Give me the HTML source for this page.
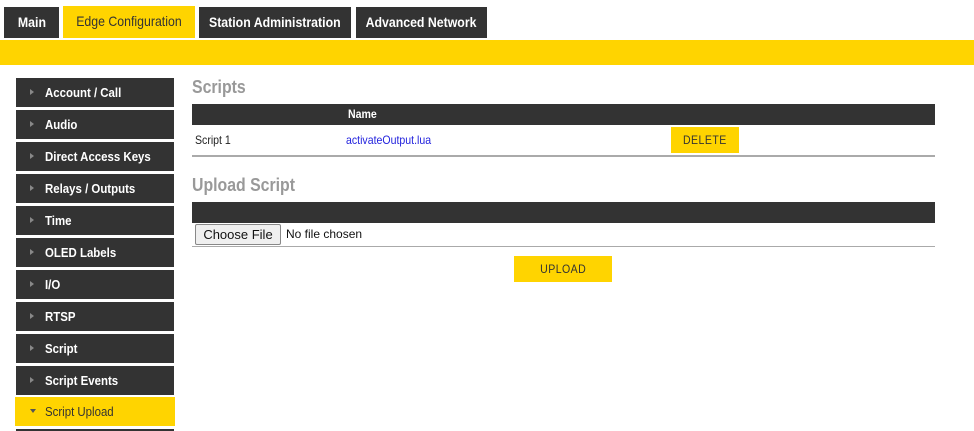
<!DOCTYPE html>
<html><head><style>
*{margin:0;padding:0;box-sizing:border-box}
html,body{width:974px;height:431px;overflow:hidden}
body{background:#fff;font-family:"Liberation Sans",sans-serif;position:relative}
.a{position:absolute}
.n{display:inline-block;transform:scaleX(0.88);transform-origin:left center;white-space:nowrap}
.c{transform-origin:center center}
.tab{position:absolute;background:#333;color:#fff;font-size:14px;font-weight:bold;text-align:center;line-height:31px;top:7px;height:31px;white-space:nowrap}
.bar{left:0;top:40px;width:974px;height:25px;background:#ffd400}
.si{position:absolute;left:16px;width:158px;height:29px;background:#333;color:#fff;font-size:13px;font-weight:bold;line-height:29px;padding-left:29px}
.si:before{content:"";position:absolute;left:14px;top:11px;border-left:4px solid #888;border-top:3.5px solid transparent;border-bottom:3.5px solid transparent}
.si.cur:before,.si.e:before{display:none}
.h{color:#999;font-size:18px;font-weight:bold}
.btn{background:#ffd400;color:#333;font-size:12px;text-align:center;letter-spacing:.5px}
</style></head><body>
<div class="tab" style="left:4px;width:55px"><span class="n c">Main</span></div>
<div class="tab" style="left:63px;width:132px;top:6px;height:32px;background:#ffd400;color:#333;font-weight:normal"><span class="n c">Edge Configuration</span></div>
<div class="tab" style="left:199px;width:152px"><span class="n c">Station Administration</span></div>
<div class="tab" style="left:356px;width:131px"><span class="n c">Advanced Network</span></div>
<div class="a bar"></div>

<div class="si" style="top:78px"><span class="n">Account / Call</span></div>
<div class="si" style="top:110px"><span class="n">Audio</span></div>
<div class="si" style="top:142px"><span class="n">Direct Access Keys</span></div>
<div class="si" style="top:174px"><span class="n">Relays / Outputs</span></div>
<div class="si" style="top:206px"><span class="n">Time</span></div>
<div class="si" style="top:238px"><span class="n">OLED Labels</span></div>
<div class="si" style="top:270px"><span class="n">I/O</span></div>
<div class="si" style="top:302px"><span class="n">RTSP</span></div>
<div class="si" style="top:334px"><span class="n">Script</span></div>
<div class="si" style="top:366px"><span class="n">Script Events</span></div>
<div class="si cur" style="top:397px;left:15px;width:160px;background:#ffd400;color:#333;font-weight:normal;padding-left:30px"><span class="n">Script Upload</span></div>
<div class="a" style="left:30px;top:409px;border-top:4px solid #555;border-left:3.5px solid transparent;border-right:3.5px solid transparent"></div>
<div class="si e" style="top:429px;height:2px"></div>

<div class="a h" style="left:192px;top:77px"><span class="n">Scripts</span></div>
<div class="a" style="left:192px;top:104px;width:743px;height:21px;background:#333"></div>
<div class="a" style="left:348px;top:107px;color:#fff;font-size:12px;font-weight:bold"><span class="n">Name</span></div>
<div class="a" style="left:195px;top:133px;font-size:12px;color:#222"><span class="n">Script 1</span></div>
<div class="a" style="left:346px;top:133px;font-size:12px;color:#2222dd"><span class="n">activateOutput.lua</span></div>
<div class="a btn" style="left:671px;top:127px;width:68px;height:26px;line-height:26px"><span class="n c">DELETE</span></div>
<div class="a" style="left:192px;top:155px;width:743px;height:2px;background:#aaa"></div>

<div class="a h" style="left:192px;top:175px"><span class="n">Upload Script</span></div>
<div class="a" style="left:192px;top:202px;width:743px;height:21px;background:#333"></div>
<div class="a" style="left:195px;top:224px;width:86px;height:21px;border:1px solid #888;border-radius:2px;background:#efefef;font-size:13px;line-height:19px;text-align:center;color:#111">Choose File</div>
<div class="a" style="left:286px;top:227px;font-size:12px;color:#111">No file chosen</div>
<div class="a" style="left:192px;top:246px;width:743px;height:1px;background:#aaa"></div>
<div class="a btn" style="left:514px;top:256px;width:98px;height:26px;line-height:26px"><span class="n c">UPLOAD</span></div>
</body></html>
